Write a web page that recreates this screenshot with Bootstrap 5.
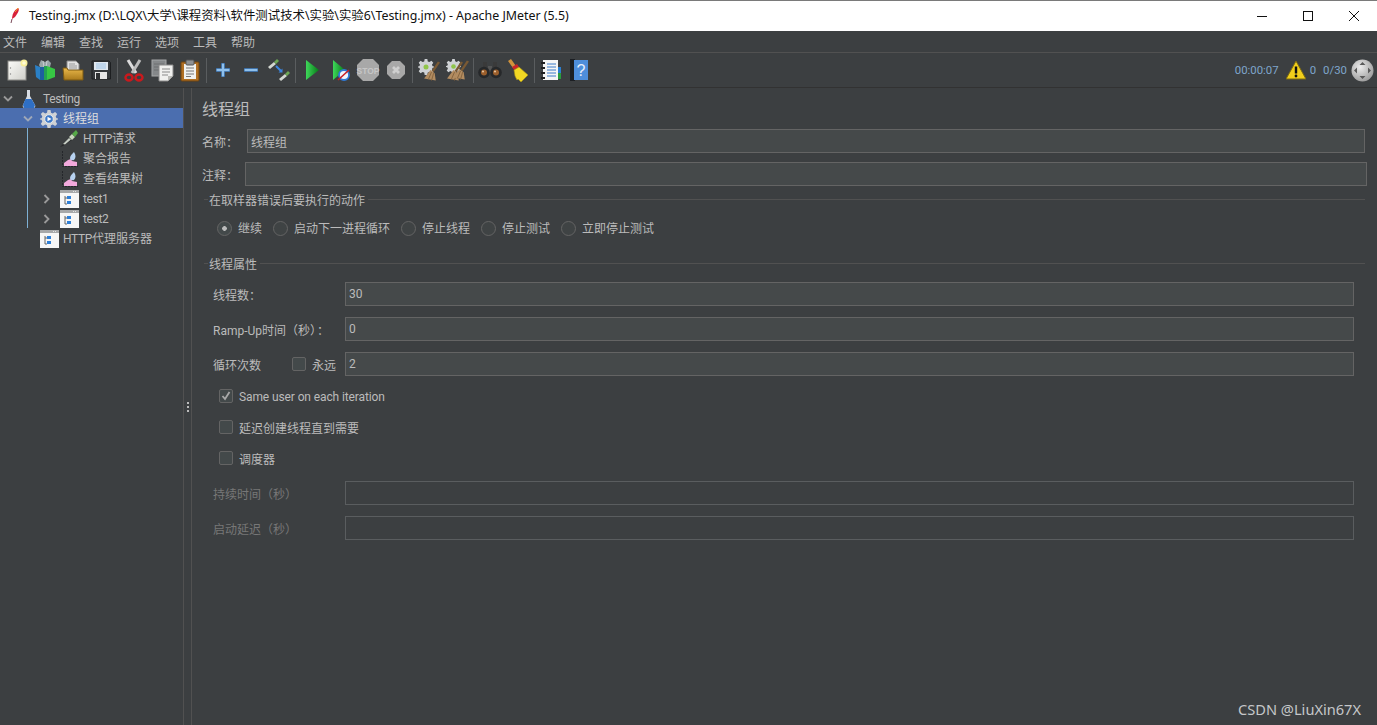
<!DOCTYPE html>
<html lang="zh-CN">
<head>
    <meta charset="UTF-8">
    <title>Testing.jmx - Apache JMeter (5.5)</title>
    <link href="https://cdn.jsdelivr.net/npm/bootstrap@5.3.0/dist/css/bootstrap.min.css" rel="stylesheet">
    <style>
        html, body { height: 100%; }
        body {
            background-color: #3c3f41;
            color: #bbbbbb;
            font-family: Roboto, "Noto Sans CJK SC", sans-serif;
            font-size: 12px;
            line-height: 16px;
            overflow: hidden;
        }
        .app { height: 725px; position: relative; }
        .title-bar { height: 31px; background: #fff; border-top: 1px solid #7a7a7a; color: #111; font-family: "Noto Sans", "Noto Sans CJK SC", sans-serif; font-size: 12.4px; }
        .title-ico { width: 29px; padding-left: 9px; }
        .win-btn { width: 46px; height: 30px; }
        .menu-bar { height: 22px; border-bottom: 1px solid #515151; padding-left: 3px; padding-top: 2px; gap: 14px; }
        .tool-bar { height: 35px; border-bottom: 1px solid #323232; padding-left: 3px; }
        .tool-btn { width: 28px; height: 28px; }
        .tool-sep { width: 1px; height: 25px; background: #5a5d5f; margin: 0 2px; }
        .run-info { color: #7fa6cc; padding-right: 3px; font-size: 11.4px; }
        .run-gap { margin-left: 7px; }
        .main-area { height: 638px; }
        .tree-pane { width: 183px; position: relative; }
        .tree-row { height: 20px; white-space: nowrap; padding-top: 2px; }
        .tree-row.active { background: #4b6eaf; color: #ddd; }
        .lat-tight { letter-spacing: -.35px; }
        .lvl-1 { padding-left: 20px; }
        .lvl-2 { padding-left: 40px; }
        .chev { width: 19px; padding-left: 3px; }
        .node-ico { width: 20px; margin-right: 4px; }
        .tree-line { position: absolute; left: 27px; top: 40px; width: 1px; height: 100px; background: #7eb0d4; }
        .split-bar { width: 9px; border-left: 1px solid #515151; border-right: 1px solid #515151; }
        .grip { width: 2px; height: 2px; background: #bbb; margin: 1px 0; }
        .form-pane { flex: 1; min-width: 0; }
        .pane-title { font-size: 16px; line-height: 22px; height: 22px; margin: 11px 0 8px 10px; }
        .jm-input.form-control {
            height: 24px; min-height: 24px; padding: 0 3px; border-radius: 0;
            background: #45494a; border: 1px solid #646464; color: #bbbbbb; font-size: 12px; line-height: 22px;
            box-shadow: none;
        }
        .jm-input.form-control:disabled { background: #3c3f41; border-color: #5a5d5f; }
        label { padding-top: 3px; }
        .name-row { margin: 0 12px 9px 10px; }
        .name-row label { width: 45px; flex: none; }
        .note-row { margin: 0 10px 4px 10px; }
        .note-row label { width: 43px; flex: none; }
        .group-head { height: 18px; margin-left: 12px; margin-right: 12px; }
        .group-head::before { content: ""; width: 4px; border-top: 1px solid #515151; }
        .group-head::after { content: ""; flex: 1; border-top: 1px solid #515151; margin-left: 2px; }
        .group-head span { padding: 3px 1px 0; }
        .group-gap { margin-bottom: 10px; }
        .radio-row { height: 20px; margin: 10px 0 16px 25px; }
        .radio-item { margin-right: 11px; }
        .radio-item span { padding-top: 2px; }
        .radio-item .form-check-input {
            width: 15px; height: 15px; margin: 0 6px 0 0; flex: none;
            background-color: #3f4344; border: 1px solid #646464; background-image: none; box-shadow: none;
        }
        .radio-item .form-check-input:checked { background: #43494a radial-gradient(circle, #bbb 0 2px, transparent 2.6px); }
        .prop-row { margin: 0 23px 11px 21px; }
        .prop-row label { width: 132px; flex: none; }
        .prop-row.off label { color: #777; }
        .prop-last { margin-bottom: 13px; }
        .wide-colon { font-family: "Noto Sans CJK TC", sans-serif; margin-left: 1px; }
        .box-check.form-check-input {
            width: 14px; height: 14px; margin: 0 6px 0 0; flex: none; border-radius: 2px;
            background-color: #43494a; border: 1px solid #646464; box-shadow: none;
        }
        .box-check.form-check-input:checked {
            background-color: #43494a;
            background-image: none;
        }
        .check-row { height: 14px; margin-left: 27px; margin-bottom: 17px; position: relative; }
        .check-row span { padding-top: 4px; }
        .check-row span.same-user { padding-top: 2px; letter-spacing: -.11px; }
        .check-last { margin-bottom: 16px; }
        .tick { position: absolute; left: 2px; top: 2px; width: 10px; height: 10px; pointer-events: none; }
        .forever { padding-right: 9px; }
        .forever .box-check { margin-top: -3px; }
        .watermark { position: absolute; right: 16px; bottom: 7px; font-family: "Noto Sans", sans-serif; font-size: 14.6px; line-height: 18px; color: #c5c7c9; }
    </style>
</head>
<body>
<svg width="0" height="0" class="position-absolute">
    <defs>
        <linearGradient id="gPage" x1="0" y1="0" x2="1" y2="1"><stop offset="0" stop-color="#fbfbf8"/><stop offset="1" stop-color="#cfcfca"/></linearGradient>
        <linearGradient id="gFolder" x1="0" y1="0" x2="0" y2="1"><stop offset="0" stop-color="#eab84a"/><stop offset="1" stop-color="#a97a1c"/></linearGradient>
        <linearGradient id="gPlay" x1="0" y1="0" x2="1" y2="0"><stop offset="0" stop-color="#3fd85a"/><stop offset="1" stop-color="#067a18"/></linearGradient>
        <radialGradient id="gBall" cx=".4" cy=".35" r=".8"><stop offset="0" stop-color="#ececec"/><stop offset="1" stop-color="#8f8f8f"/></radialGradient>
        <symbol id="brush" viewBox="0 0 16 18"><path d="M14 0l2 1-6 9-2-1z" fill="#7a5a34"/><path d="M7 8l4 3 1 7-11-2z" fill="#b28c60"/><path d="M8 10l-3 7M10 11l-2 7" stroke="#7f5f3a" stroke-width=".8"/></symbol>
        <symbol id="cog" viewBox="0 0 18 18"><path d="M7.500 0h3l.5 2.700 1.800.8L15.100 2l2.100 2.100-1.500 2.300.8 1.800L19 8.700v.6l-2.500.5-.8 1.800 1.500 2.300-2.100 2.100-2.300-1.500-1.800.8-.5 2.700h-3L7 15.300l-1.800-.8L2.900 16 .8 13.900l1.500-2.300-.8-1.800L-1 9.300v-.6l2.500-.5.800-1.800L.8 4.100 2.900 2l2.300 1.500L7 2.700z" fill="#cfd2d5"/></symbol>
        <symbol id="chart" viewBox="0 0 17 17"><path d="M1.500 0v15.500H17" fill="none" stroke="#24262a" stroke-dasharray="2 1"/><path d="M3 15v-3l4-3 3-1 1 2 5 1v4z" fill="#f2a9dc"/><path d="M13 1c2 3 2 6 0 8-3 1-4-1-4-2 0-2 2-4 4-6z" fill="#b7d2f0"/></symbol>
        <symbol id="node" viewBox="0 0 19 18"><rect width="19" height="18" fill="#f6f6f6"/><rect width="19" height="3" fill="#a6a8aa"/><path d="M13 1.500h4" stroke="#e4e4e4" stroke-dasharray="1 1"/><path d="M5 6v8h2M5 8h2" fill="none" stroke="#666"/><rect x="7" y="6" width="4" height="3" fill="#2f7fd6"/><rect x="7" y="11" width="4" height="3" fill="#2f7fd6"/></symbol>
    </defs>
</svg>
<div class="app d-flex flex-column">

    <!-- title bar -->
    <div class="title-bar d-flex align-items-center flex-shrink-0">
        <div class="title-ico d-flex">
            <svg width="12" height="18" viewBox="0 0 12 18"><path d="M9 1 C11 2 9 6 6 10 L3 12 C3 8 5 3 9 1Z" fill="#d8203a"/><path d="M3 12 L2 16" stroke="#7a4a5a" stroke-width="1"/><path d="M9 1 C8 3 7 4 6 5" stroke="#f5a623" fill="none"/></svg>
        </div>
        <span class="flex-grow-1">Testing.jmx (D:\LQX\大学\课程资料\软件测试技术\实验\实验6\Testing.jmx) - Apache JMeter (5.5)</span>
        <div class="win-btn d-flex align-items-center justify-content-center">
            <svg width="10" height="10"><path d="M0 5.500H10" stroke="#111"/></svg>
        </div>
        <div class="win-btn d-flex align-items-center justify-content-center">
            <svg width="10" height="10"><rect x=".5" y=".5" width="9" height="9" fill="none" stroke="#111"/></svg>
        </div>
        <div class="win-btn d-flex align-items-center justify-content-center">
            <svg width="10" height="10"><path d="M0 0L10 10M10 0L0 10" stroke="#111"/></svg>
        </div>
    </div>

    <!-- menu -->
    <div class="menu-bar d-flex align-items-center flex-shrink-0">
        <span>文件</span><span>编辑</span><span>查找</span><span>运行</span><span>选项</span><span>工具</span><span>帮助</span>
    </div>

    <!-- toolbar -->
    <div class="tool-bar d-flex align-items-center flex-shrink-0">
        <div class="tool-btn d-flex align-items-center justify-content-center">
            <svg width="22" height="22" viewBox="0 0 22 22"><rect x="2" y="2" width="18" height="19" fill="url(#gPage)" stroke="#8e8e8a"/><circle cx="4.500" cy="9" r=".7" fill="#888"/><circle cx="4.500" cy="15" r=".7" fill="#888"/><circle cx="18" cy="4" r="3.500" fill="#f8ee9a"/><circle cx="18" cy="4" r="1.800" fill="#fffbd8"/></svg>
        </div>
        <div class="tool-btn d-flex align-items-center justify-content-center">
            <svg width="22" height="22" viewBox="0 0 22 22"><path d="M5 6l2-5 4 2 3-2 3 3-1 4H6z" fill="#98a5a8"/><path d="M9 2l1 6M13 2l-1 6" stroke="#c9cfd1"/><path d="M1 6l5 2v13l-4-3z" fill="#2a80c6"/><path d="M6 8h4v13H6z" fill="#1d5fa0"/><path d="M10 7h3v14h-3z" fill="#23a152"/><path d="M13 7l8 3v8l-8 3z" fill="#37c744"/></svg>
        </div>
        <div class="tool-btn d-flex align-items-center justify-content-center">
            <svg width="22" height="22" viewBox="0 0 22 22"><path d="M5 2h9l3 3v7H5z" fill="#e2e2e2" stroke="#8b8b8b"/><path d="M7 5h6M7 7h8M7 9h8" stroke="#999"/><path d="M1 9h4l1 2h15v10H2z" fill="url(#gFolder)" stroke="#7d5a12"/></svg>
        </div>
        <div class="tool-btn d-flex align-items-center justify-content-center">
            <svg width="22" height="22" viewBox="0 0 22 22"><path d="M2 2h17l1.500 1.500V20H2z" fill="#36393c" stroke="#1d1f21"/><rect x="4" y="3" width="14" height="8" fill="#dfe6ee"/><path d="M6 5h10M6 7h10M6 9h10" stroke="#9ec3e6"/><rect x="5" y="13" width="12" height="7" fill="#e6e6e6"/><rect x="6" y="14" width="4" height="6" fill="#2f3133"/></svg>
        </div>
        <div class="tool-sep"></div>
        <div class="tool-btn d-flex align-items-center justify-content-center">
            <svg width="20" height="23" viewBox="0 0 20 23"><path d="M4 1l8 13" stroke="#dcdcdc" stroke-width="3"/><path d="M16 1L8 14" stroke="#bcbcbc" stroke-width="3"/><ellipse cx="5" cy="18.500" rx="3.500" ry="3" fill="none" stroke="#c9191d" stroke-width="2.400"/><ellipse cx="15" cy="18.500" rx="3.500" ry="3" fill="none" stroke="#c9191d" stroke-width="2.400"/></svg>
        </div>
        <div class="tool-btn d-flex align-items-center justify-content-center">
            <svg width="23" height="23" viewBox="0 0 23 23"><rect x="1" y="1" width="14" height="16" fill="#85888a" stroke="#a6a8a9"/><path d="M3 5h10M3 8h10M3 11h10" stroke="#6c6f71"/><path d="M8 6h14v11l-5 5H8z" fill="#f0f0ee" stroke="#8a8a8a"/><path d="M11 10h8M11 13h8M11 16h6" stroke="#8a8a8a"/><path d="M17 22v-5h5z" fill="#bcbcb8"/></svg>
        </div>
        <div class="tool-btn d-flex align-items-center justify-content-center">
            <svg width="20" height="23" viewBox="0 0 20 23"><rect x="1" y="3" width="18" height="19" rx="1" fill="#b06f22" stroke="#6f4510"/><path d="M4 5h12v15H4z" fill="#f1f1ef"/><rect x="6" y="1" width="8" height="5" rx="1" fill="#8f9193" stroke="#555"/><path d="M6 9h8M6 12h8M6 15h8M6 17.500h5" stroke="#777"/></svg>
        </div>
        <div class="tool-sep"></div>
        <div class="tool-btn d-flex align-items-center justify-content-center">
            <svg width="16" height="16" viewBox="0 0 16 16"><path d="M8 1v14M1 8h14" stroke="#2f5f96" stroke-width="4"/><path d="M8 1.500v13M1.500 8h13" stroke="#8fc0ec" stroke-width="2.400"/></svg>
        </div>
        <div class="tool-btn d-flex align-items-center justify-content-center">
            <svg width="16" height="16" viewBox="0 0 16 16"><path d="M1 8h14" stroke="#2f5f96" stroke-width="4"/><path d="M1.500 8h13" stroke="#8fc0ec" stroke-width="2.400"/></svg>
        </div>
        <div class="tool-btn d-flex align-items-center justify-content-center">
            <svg width="24" height="22" viewBox="0 0 24 22"><path d="M1 8l6-5 2 2-6 5z" fill="#d3d8d2"/><path d="M7 3l3-3 2 2-3 3z" fill="#6da755"/><path d="M12 20l6-5 2 2-6 5z" fill="#d3d8d2"/><path d="M18 15l3-3 2 2-3 3z" fill="#6da755"/><path d="M9 7l5 5" stroke="#3b86e0" stroke-width="2"/><path d="M15.500 9.500v4h-4z" fill="#3b86e0"/></svg>
        </div>
        <div class="tool-sep"></div>
        <div class="tool-btn d-flex align-items-center justify-content-center">
            <svg width="14" height="20" viewBox="0 0 14 20"><path d="M1 0l13 10L1 20z" fill="url(#gPlay)"/></svg>
        </div>
        <div class="tool-btn d-flex align-items-center justify-content-center">
            <svg width="20" height="21" viewBox="0 0 20 21"><path d="M3 0l12 10L3 20z" fill="url(#gPlay)"/><circle cx="14" cy="15" r="5" fill="#f1f5fb" stroke="#2f7ad8" stroke-width="1.800"/><path d="M8 20l11-10" stroke="#c81d25" stroke-width="1.600"/></svg>
        </div>
        <div class="tool-btn d-flex align-items-center justify-content-center">
            <svg width="24" height="24" viewBox="0 0 24 24"><path d="M7 1h10l6 6v10l-6 6H7l-6-6V7z" fill="#a8a8a8"/><text x="12" y="15.500" font-family="Liberation Sans, sans-serif" font-size="8.500" font-weight="700" fill="#c6c6c6" text-anchor="middle">STOP</text></svg>
        </div>
        <div class="tool-btn d-flex align-items-center justify-content-center">
            <svg width="20" height="20" viewBox="0 0 20 20"><path d="M6 1h8l5 5v8l-5 5H6l-5-5V6z" fill="#a8a8a8"/><path d="M7 7l6 6M13 7l-6 6" stroke="#cfcfcf" stroke-width="2.800"/></svg>
        </div>
        <div class="tool-sep"></div>
        <div class="tool-btn d-flex align-items-center justify-content-center">
            <svg width="22" height="24" viewBox="0 0 22 24"><use href="#cog" x="0" y="1" width="16" height="16"/><circle cx="8" cy="9" r="2.500" fill="#8fc54a"/><use href="#brush" x="5" y="3" width="17" height="20"/></svg>
        </div>
        <div class="tool-btn d-flex align-items-center justify-content-center">
            <svg width="24" height="24" viewBox="0 0 24 24"><use href="#cog" x="1" y="1" width="15" height="15"/><circle cx="8.500" cy="8.500" r="2.300" fill="#8fc54a"/><use href="#brush" x="1" y="3" width="17" height="20"/><use href="#brush" x="7" y="2" width="17" height="20"/></svg>
        </div>
        <div class="tool-sep"></div>
        <div class="tool-btn d-flex align-items-center justify-content-center">
            <svg width="24" height="18" viewBox="0 0 24 18"><path d="M5 1h4v5H5zM15 1h4v5h-4z" fill="#3a3a3a"/><rect x="10" y="5" width="4" height="7" fill="#555"/><circle cx="6" cy="11.500" r="5.800" fill="#26282a"/><circle cx="18" cy="11.500" r="5.800" fill="#26282a"/><circle cx="6" cy="11.500" r="3" fill="#9c5f2c"/><circle cx="18" cy="11.500" r="3" fill="#9c5f2c"/><circle cx="5" cy="10.500" r="1" fill="#e9c9a4"/><circle cx="17" cy="10.500" r="1" fill="#e9c9a4"/></svg>
        </div>
        <div class="tool-btn d-flex align-items-center justify-content-center">
            <svg width="22" height="23" viewBox="0 0 22 23"><path d="M1 2l3-2 5 7-3 2z" fill="#d0923c"/><path d="M5 8l5-3 2 3-5 3z" fill="#c8242b"/><path d="M7 11l5-3 9 8-7 7-3-3-1 1-2-4z" fill="#f2d823" stroke="#a89314" stroke-width=".6"/></svg>
        </div>
        <div class="tool-sep"></div>
        <div class="tool-btn d-flex align-items-center justify-content-center">
            <svg width="21" height="22" viewBox="0 0 21 22"><rect x="2" y="1" width="15" height="20" fill="#f5f5f5"/><path d="M0 4h4M0 9h4M0 14h4M0 19h4" stroke="#1f1f1f" stroke-width="2"/><path d="M6 5h9M6 8h9M6 11h9M6 14h9M6 17h9" stroke="#3a7bc8"/><rect x="17" y="8" width="3" height="6" fill="#2c7fd0"/><rect x="17" y="14" width="3" height="6" fill="#2a9c3e"/></svg>
        </div>
        <div class="tool-btn d-flex align-items-center justify-content-center">
            <svg width="18" height="22" viewBox="0 0 18 22"><rect x="0" y="0" width="5" height="22" fill="#1c1f23"/><rect x="4" y="1" width="14" height="20" fill="#4e8edb"/><text x="11" y="17" font-family="Liberation Sans, sans-serif" font-size="16" fill="#e8f0fa" text-anchor="middle">?</text></svg>
        </div>
        <div class="run-info ms-auto d-flex align-items-center">
            <span>00:00:07</span>
            <svg class="run-gap" width="20" height="20" viewBox="0 0 20 20"><path d="M10 1L20 19H0z" fill="#f2cf1b" stroke="#7c6a12"/><path d="M10 6.500v7" stroke="#111" stroke-width="2.400"/><circle cx="10" cy="16" r="1.400" fill="#111"/></svg>
            <span class="ms-1">0</span>
            <span class="run-gap">0/30</span>
            <svg class="ms-1" width="23" height="23" viewBox="0 0 23 23"><circle cx="11.500" cy="11.500" r="11" fill="url(#gBall)"/><path d="M11.500 3l3 3h-6zM11.500 20l3-3h-6zM3 11.500l3-3v6zM20 11.500l-3-3v6z" fill="#5a5a5a"/></svg>
        </div>
    </div>

    <div class="main-area d-flex flex-grow-1">
        <!-- test plan tree -->
        <div class="tree-pane flex-shrink-0">
            <div class="tree-line"></div>
            <div class="tree-row d-flex align-items-center">
                <span class="chev d-flex"><svg width="10" height="8"><path d="M1 1.500l4 4 4-4" fill="none" stroke="#9a9a9a" stroke-width="1.800"/></svg></span>
                <span class="node-ico d-flex justify-content-center"><svg width="14" height="18" viewBox="0 0 14 18"><path d="M5 0h3v6l5 9a2 2 0 0 1-2 3H3a2 2 0 0 1-2-3l4-9z" fill="#d8dde4"/><path d="M3.500 9h6l3.500 6-1 3H2l-1-3z" fill="#2f6fc4"/></svg></span>
                <span class="lat-tight">Testing</span>
            </div>
            <div class="tree-row active d-flex align-items-center">
                <span class="lvl-1"></span>
                <span class="chev d-flex"><svg width="10" height="8"><path d="M1 1.500l4 4 4-4" fill="none" stroke="#9fa8b8" stroke-width="1.800"/></svg></span>
                <span class="node-ico d-flex justify-content-center"><svg width="18" height="18" viewBox="0 0 18 18"><use href="#cog" width="18" height="18"/><circle cx="9" cy="9" r="4.300" fill="#3c78c8" stroke="#e8eaec" stroke-width="1"/><path d="M7.500 6.800l4 2.200-4 2.200z" fill="#fff"/></svg></span>
                <span>线程组</span>
            </div>
            <div class="tree-row d-flex align-items-center">
                <span class="lvl-2"></span>
                <span class="chev"></span>
                <span class="node-ico d-flex justify-content-center"><svg width="20" height="18" viewBox="0 0 20 18"><path d="M1 17l9-9 3 2-9 6z" fill="#26282a"/><path d="M4 14l6-6 2 1.500-6 5z" fill="#c6cdc4"/><path d="M10 7l3 3 3-3-3-3z" fill="#c8d6bd"/><path d="M13 4l3 3 3-4-2-3z" fill="#56a948"/></svg></span>
                <span><span class="lat-tight">HTTP</span>请求</span>
            </div>
            <div class="tree-row d-flex align-items-center">
                <span class="lvl-2"></span>
                <span class="chev"></span>
                <span class="node-ico d-flex justify-content-center"><svg width="17" height="17"><use href="#chart" width="17" height="17"/></svg></span>
                <span>聚合报告</span>
            </div>
            <div class="tree-row d-flex align-items-center">
                <span class="lvl-2"></span>
                <span class="chev"></span>
                <span class="node-ico d-flex justify-content-center"><svg width="17" height="17"><use href="#chart" width="17" height="17"/></svg></span>
                <span>查看结果树</span>
            </div>
            <div class="tree-row d-flex align-items-center">
                <span class="lvl-2"></span>
                <span class="chev d-flex"><svg width="8" height="10"><path d="M1.500 1l4 4-4 4" fill="none" stroke="#9a9a9a" stroke-width="1.800"/></svg></span>
                <span class="node-ico d-flex justify-content-center"><svg width="19" height="18"><use href="#node" width="19" height="18"/></svg></span>
                <span class="lat-tight">test1</span>
            </div>
            <div class="tree-row d-flex align-items-center">
                <span class="lvl-2"></span>
                <span class="chev d-flex"><svg width="8" height="10"><path d="M1.500 1l4 4-4 4" fill="none" stroke="#9a9a9a" stroke-width="1.800"/></svg></span>
                <span class="node-ico d-flex justify-content-center"><svg width="19" height="18"><use href="#node" width="19" height="18"/></svg></span>
                <span class="lat-tight">test2</span>
            </div>
            <div class="tree-row d-flex align-items-center">
                <span class="lvl-1"></span>
                <span class="chev"></span>
                <span class="node-ico d-flex justify-content-center"><svg width="19" height="18"><use href="#node" width="19" height="18"/></svg></span>
                <span><span class="lat-tight">HTTP</span>代理服务器</span>
            </div>
        </div>

        <div class="split-bar d-flex flex-column align-items-center justify-content-center flex-shrink-0">
            <div class="grip"></div><div class="grip"></div><div class="grip"></div>
        </div>

        <!-- thread group form -->
        <div class="form-pane">
            <div class="pane-title">线程组</div>
            <div class="name-row d-flex align-items-center">
                <label>名称：</label>
                <input class="jm-input form-control" type="text" value="线程组">
            </div>
            <div class="note-row d-flex align-items-center">
                <label>注释：</label>
                <input class="jm-input form-control" type="text">
            </div>

            <div class="group-head d-flex align-items-center"><span>在取样器错误后要执行的动作</span></div>
            <div class="radio-row d-flex align-items-center">
                <div class="radio-item d-flex align-items-center"><input class="form-check-input" type="radio" name="onerr" checked><span>继续</span></div>
                <div class="radio-item d-flex align-items-center"><input class="form-check-input" type="radio" name="onerr"><span>启动下一进程循环</span></div>
                <div class="radio-item d-flex align-items-center"><input class="form-check-input" type="radio" name="onerr"><span>停止线程</span></div>
                <div class="radio-item d-flex align-items-center"><input class="form-check-input" type="radio" name="onerr"><span>停止测试</span></div>
                <div class="radio-item d-flex align-items-center"><input class="form-check-input" type="radio" name="onerr"><span>立即停止测试</span></div>
            </div>

            <div class="group-head group-gap d-flex align-items-center"><span>线程属性</span></div>
            <div class="prop-row d-flex align-items-center">
                <label>线程数：</label>
                <input class="jm-input form-control" type="text" value="30">
            </div>
            <div class="prop-row d-flex align-items-center">
                <label>Ramp-Up时间（秒）<span class="wide-colon">：</span></label>
                <input class="jm-input form-control" type="text" value="0">
            </div>
            <div class="prop-row prop-last d-flex align-items-center">
                <label class="d-flex align-items-center forever"><span class="me-auto">循环次数</span><input class="box-check form-check-input" type="checkbox"><span>永远</span></label>
                <input class="jm-input form-control" type="text" value="2">
            </div>
            <div class="check-row d-flex align-items-center">
                <input class="box-check form-check-input" type="checkbox" checked>
                <svg class="tick" viewBox="0 0 10 10"><path d="M1.500 5l2.500 3 4.500-7" fill="none" stroke="#a9a9a9" stroke-width="1.800"/></svg>
                <span class="same-user">Same user on each iteration</span>
            </div>
            <div class="check-row d-flex align-items-center">
                <input class="box-check form-check-input" type="checkbox">
                <span>延迟创建线程直到需要</span>
            </div>
            <div class="check-row check-last d-flex align-items-center">
                <input class="box-check form-check-input" type="checkbox">
                <span>调度器</span>
            </div>
            <div class="prop-row off d-flex align-items-center">
                <label>持续时间（秒）</label>
                <input class="jm-input form-control" type="text" disabled>
            </div>
            <div class="prop-row off d-flex align-items-center">
                <label>启动延迟（秒）</label>
                <input class="jm-input form-control" type="text" disabled>
            </div>
        </div>
    </div>

    <div class="watermark">CSDN @LiuXin67X</div>
</div>
<script src="https://cdn.jsdelivr.net/npm/bootstrap@5.3.0/dist/js/bootstrap.bundle.min.js"></script>
</body>
</html>
